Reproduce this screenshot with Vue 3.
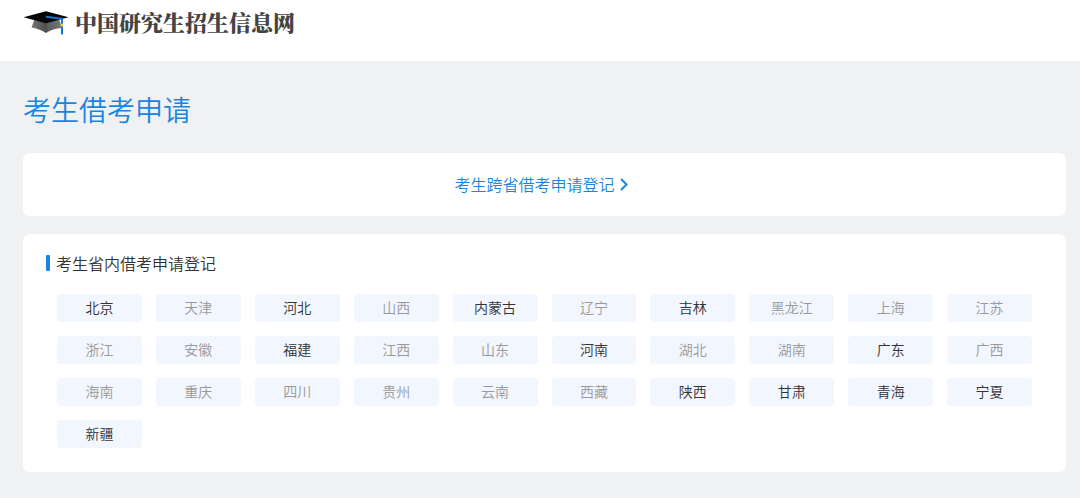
<script setup>
const open = new Set(['北京', '河北', '内蒙古', '吉林', '福建', '河南', '广东', '陕西', '甘肃', '青海', '宁夏', '新疆'])

const provinces = [
  '北京', '天津', '河北', '山西', '内蒙古', '辽宁', '吉林', '黑龙江', '上海', '江苏',
  '浙江', '安徽', '福建', '江西', '山东', '河南', '湖北', '湖南', '广东', '广西',
  '海南', '重庆', '四川', '贵州', '云南', '西藏', '陕西', '甘肃', '青海', '宁夏',
  '新疆',
].map((name) => ({ name, open: open.has(name) }))
</script>

<template>
  <div class="page">
    <header class="header">
      <a class="brand" href="#">
        <svg class="cap" viewBox="0 0 46 24" aria-hidden="true">
          <defs>
            <linearGradient id="cap-base" x1="0" y1="0" x2="1" y2="0">
              <stop offset="0" stop-color="#777" />
              <stop offset="0.5" stop-color="#4c4c4c" />
              <stop offset="0.52" stop-color="#5c5c5c" />
              <stop offset="1" stop-color="#777" />
            </linearGradient>
          </defs>
          <path d="M11.500 8 L23 11 L36 8 L39 17 Q30 17.500 23 22 Q16 17.500 8.500 16.500 Z" fill="url(#cap-base)" />
          <path d="M0.500 6.300 L23 0.300 L45.500 6.300 L23 12.300 Z" fill="#050505" />
          <path d="M23 5.800 L39 7.800 V23.500" fill="none" stroke="#1673d6" stroke-width="2" />
          <circle cx="39" cy="14" r="1.500" fill="#f2cf3a" />
        </svg>
        <span class="brand-name">中国研究生招生信息网</span>
      </a>
    </header>

    <main class="content">
      <h1 class="title">考生借考申请</h1>

      <section class="card cross">
        <a class="cross-link" href="#">
          <span>考生跨省借考申请登记</span>
          <svg class="chevron" viewBox="0 0 10 14" aria-hidden="true">
            <path d="M2 2 L7.500 7.500 L2 13" fill="none" stroke="currentColor" stroke-width="2" />
          </svg>
        </a>
      </section>

      <section class="card local">
        <h2 class="subtitle">考生省内借考申请登记</h2>
        <div class="grid">
          <button
            v-for="p in provinces"
            :key="p.name"
            class="province"
            type="button"
            :disabled="!p.open"
          >{{ p.name }}</button>
        </div>
      </section>
    </main>
  </div>
</template>

<style>
body {
  background: #f0f1f3;
}
</style>

<style scoped>
.page {
  min-height: 100vh;
  box-sizing: border-box;
  background: #f0f1f3;
  color: #333;
  font-family: "Noto Sans CJK SC DemiLight", "Noto Sans CJK SC", sans-serif;
  font-weight: 350;
}

.header {
  height: 61px;
  background: #fff;
}

.brand {
  display: inline-flex;
  align-items: flex-start;
  gap: 6px;
  padding: 6px 0 0 23px;
  color: #444;
  text-decoration: none;
}

.cap {
  width: 46px;
  height: 24px;
  margin-top: 5px;
}

.brand-name {
  font-family: "Noto Serif CJK SC", "Noto Sans CJK SC", serif;
  font-size: 22px;
  line-height: 32px;
  font-weight: 900;
}

.content {
  padding: 26px 14px 26px 23px;
}

.title {
  margin: 0 0 22px;
  color: #1a85e0;
  font-size: 28px;
  line-height: 44px;
  font-weight: inherit;
}

.card {
  border-radius: 7px;
  background: #fff;
}

.cross {
  display: flex;
  justify-content: center;
  padding: 19px 6px 20px 0;
  margin-bottom: 18px;
}

.cross-link {
  display: flex;
  align-items: center;
  gap: 4px;
  color: #1a85e0;
  font-size: 16px;
  line-height: 24px;
  text-decoration: none;
}

.chevron {
  width: 10px;
  height: 14px;
}

.local {
  padding: 17px 34px 24px 23px;
}

.subtitle {
  display: flex;
  align-items: center;
  gap: 6px;
  margin: 0 0 19px;
  font-size: 16px;
  line-height: 24px;
  font-weight: inherit;
}

.subtitle::before {
  content: "";
  width: 4px;
  height: 16px;
  border-radius: 1px;
  background: #1a85e0;
}

.grid {
  display: grid;
  grid-template-columns: repeat(10, 1fr);
  gap: 14px;
  margin-left: 11px;
}

.province {
  min-width: 0;
  height: 28px;
  padding: 0 0 2px;
  border: 0;
  border-radius: 4px;
  background: #f1f6ff;
  color: #333;
  font: inherit;
  font-size: 14px;
  line-height: 26px;
  cursor: pointer;
}

.province:disabled {
  color: #999;
  cursor: default;
}
</style>
